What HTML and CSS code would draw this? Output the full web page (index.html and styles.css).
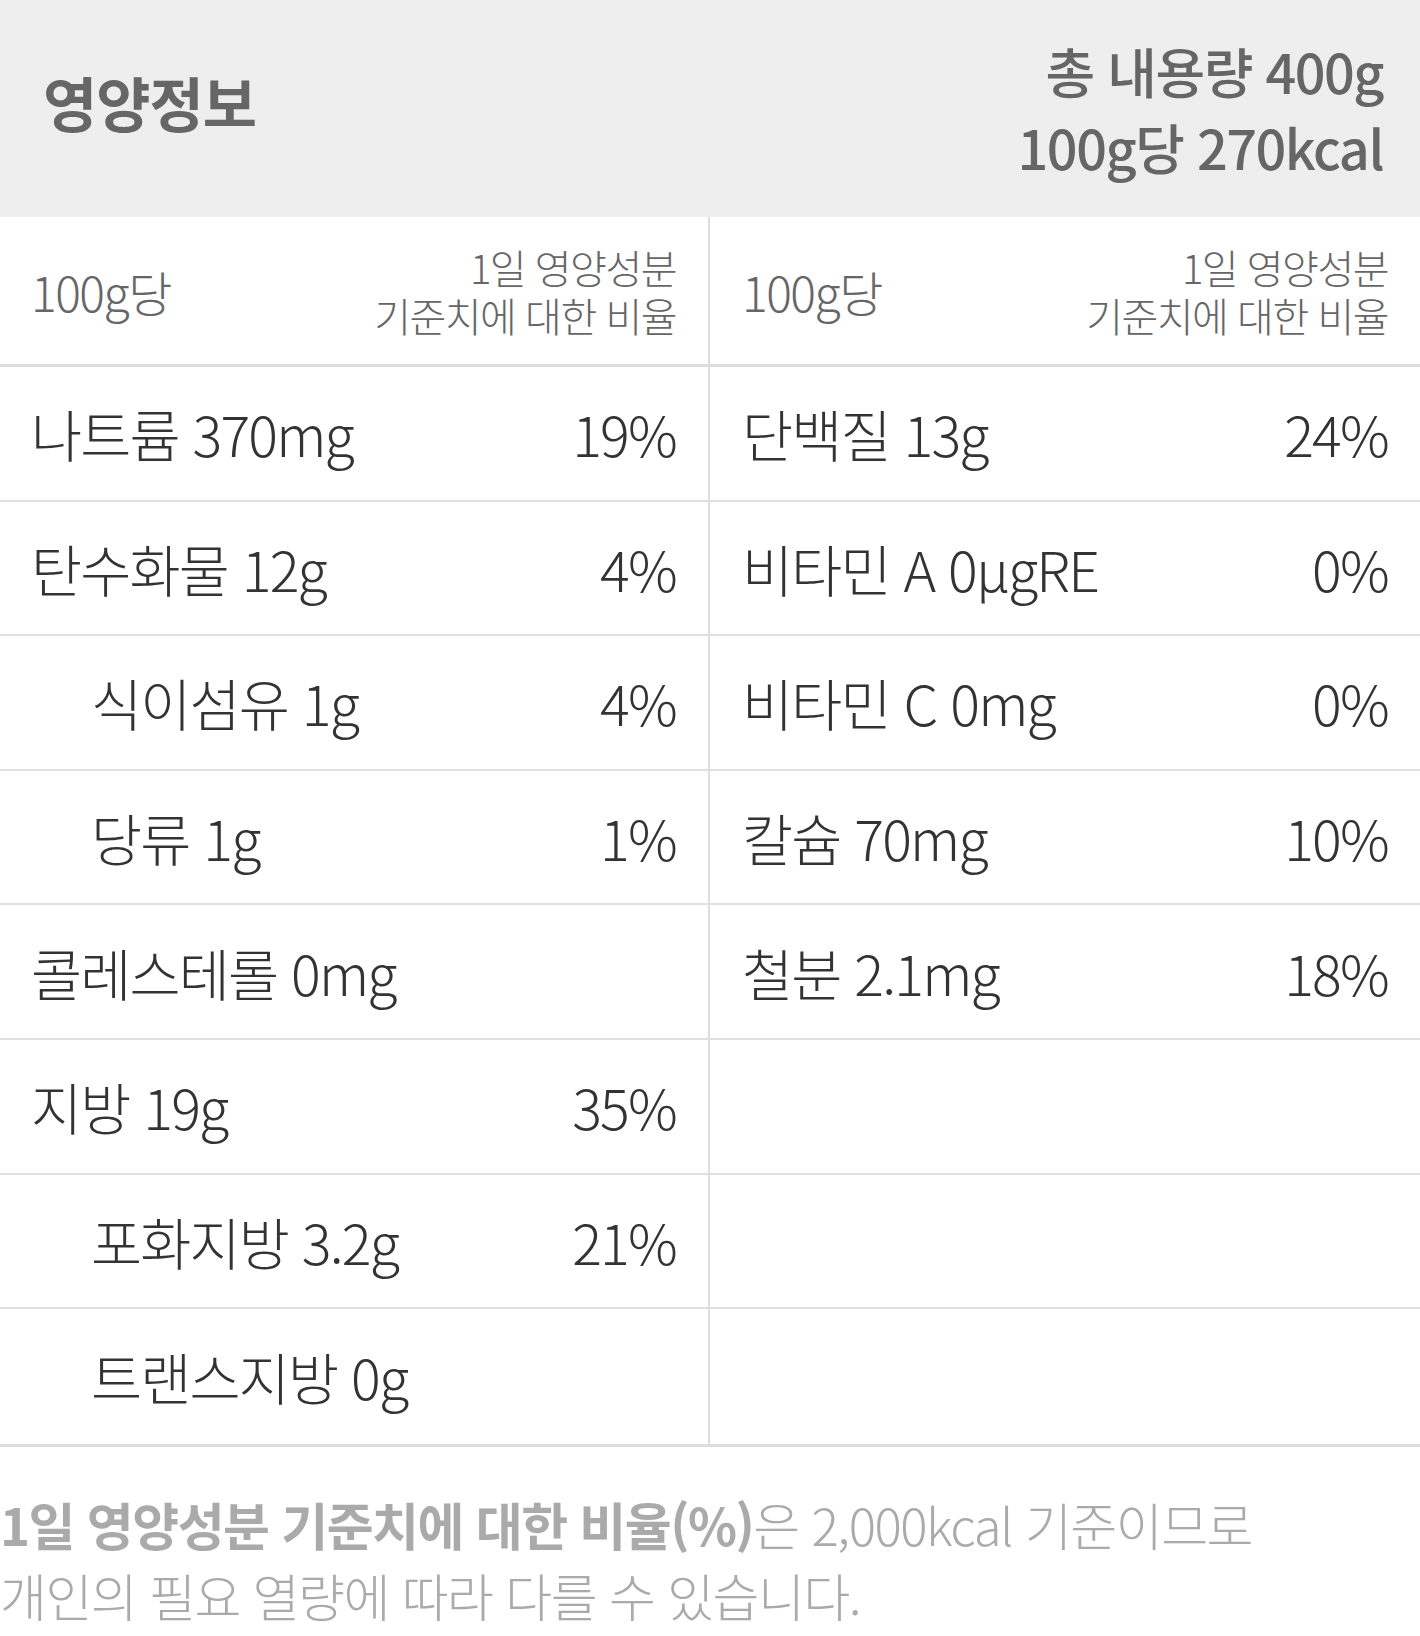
FILE: index.html
```html
<!DOCTYPE html>
<html lang="ko">
<head>
    <meta charset="UTF-8">
    <meta name="viewport" content="width=device-width, initial-scale=1.0">
    <title>영양정보</title>
    <link rel="stylesheet" href="styles.css">
</head>
<body>

    <main class="nutrition">
        <header class="nutrition-head">
            <h2>영양정보</h2>
            <div class="total">
                <p>총 내용량 400g</p>
                <p>100g당 270kcal</p>
            </div>
        </header>

        <div class="nutrition-table">
            <!-- column titles -->
            <div class="cell sub">
                <span>100g당</span>
                <span class="ratio">1일 영양성분<br>기준치에 대한 비율</span>
            </div>
            <div class="cell sub">
                <span>100g당</span>
                <span class="ratio">1일 영양성분<br>기준치에 대한 비율</span>
            </div>

            <div class="cell"><span>나트륨 370mg</span><span>19%</span></div>
            <div class="cell"><span>단백질 13g</span><span>24%</span></div>

            <div class="cell"><span>탄수화물 12g</span><span>4%</span></div>
            <div class="cell"><span>비타민 A 0μgRE</span><span>0%</span></div>

            <div class="cell indent"><span>식이섬유 1g</span><span>4%</span></div>
            <div class="cell"><span>비타민 C 0mg</span><span>0%</span></div>

            <div class="cell indent"><span>당류 1g</span><span>1%</span></div>
            <div class="cell"><span>칼슘 70mg</span><span>10%</span></div>

            <div class="cell"><span>콜레스테롤 0mg</span><span></span></div>
            <div class="cell"><span>철분 2.1mg</span><span>18%</span></div>

            <div class="cell"><span>지방 19g</span><span>35%</span></div>
            <div class="cell"></div>

            <div class="cell indent"><span>포화지방 3.2g</span><span>21%</span></div>
            <div class="cell"></div>

            <div class="cell indent"><span>트랜스지방 0g</span><span></span></div>
            <div class="cell"></div>
        </div>

        <p class="note"><strong>1일 영양성분 기준치에 대한 비율(%)</strong>은 2,000kcal 기준이므로<br>개인의 필요 열량에 따라 다를 수 있습니다.</p>
    </main>

</body>
</html>
```

FILE: styles.css
```css
body {
    margin: 0;
    background: #fff;
    font-family: "Noto Sans CJK KR", "Noto Sans", sans-serif;
}

.nutrition {
    width: 1420px;
}

.nutrition-head {
    display: flex;
    justify-content: space-between;
    align-items: center;
    height: 217px;
    box-sizing: border-box;
    padding: 0 37px 0 43px;
    background-color: #eeeeee;
    color: #666;
}

.nutrition-head h2 {
    margin: 0 0 14px;
    font-size: 59px;
    font-weight: 700;
    letter-spacing: -1px;
}

.total {
    text-align: right;
    font-size: 54px;
    font-weight: 500;
    line-height: 76px;
    letter-spacing: -1.5px;
}

.total p {
    margin: 0;
}

.nutrition-table {
    display: grid;
    grid-template-columns: 1fr 1fr;
    border-bottom: 3px solid #dddddd;
}

.cell {
    display: flex;
    justify-content: space-between;
    align-items: center;
    height: 134.6px;
    box-sizing: border-box;
    padding: 0 32px 0 31px;
    border-bottom: 2px solid #e0e0e0;
    font-size: 55.5px;
    font-weight: 300;
    color: #333;
    letter-spacing: -1.8px;
}

.cell:nth-child(odd) {
    border-right: 2px solid #dddddd;
}

.cell:nth-child(even) {
    padding-left: 32px;
}

.nutrition-table .cell:nth-last-child(-n+2) {
    border-bottom: none;
}

.cell.indent {
    padding-left: 91px;
}

.cell.sub {
    height: 150px;
    border-bottom: 3px solid #dddddd;
    font-size: 48px;
    color: #666;
    letter-spacing: -1.5px;
}

.cell.sub .ratio {
    text-align: right;
    font-size: 40px;
    line-height: 48px;
}

.note {
    margin: 0;
    padding: 42px 0 0;
    font-size: 51px;
    font-weight: 300;
    line-height: 71px;
    color: #aaaaaa;
    letter-spacing: -1.5px;
}

.note strong {
    font-weight: 700;
}
```
